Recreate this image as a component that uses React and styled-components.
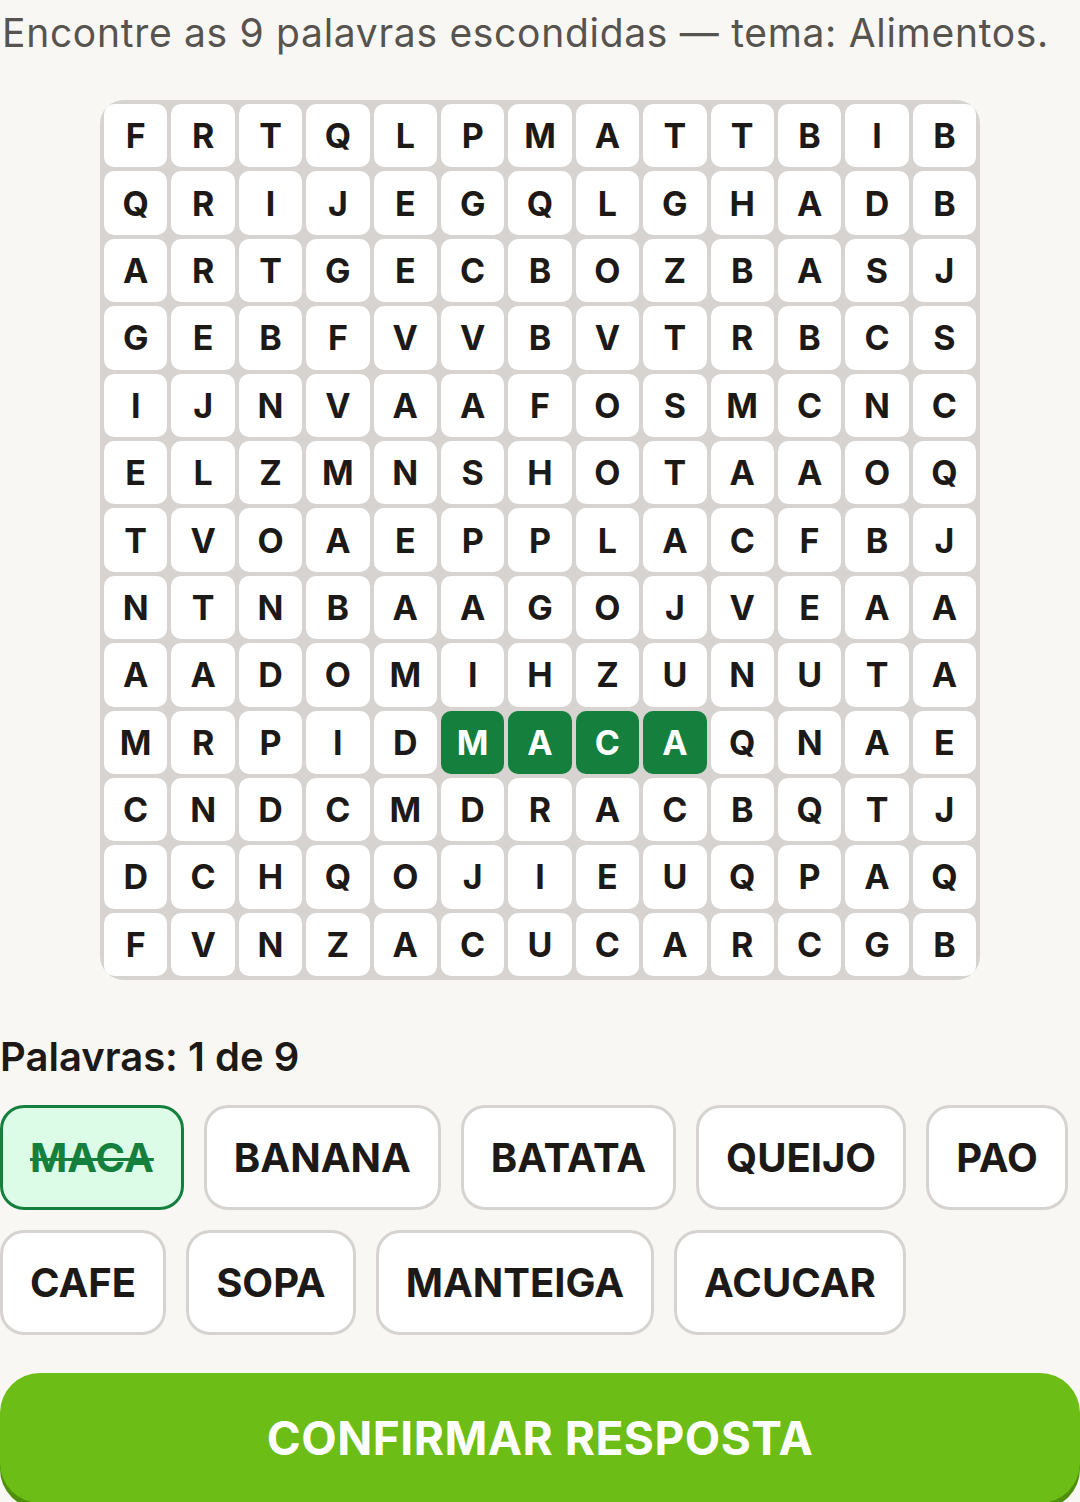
import React from "react";
import styled, { createGlobalStyle } from "styled-components";

const GlobalStyle = createGlobalStyle`
  html, body {
    margin: 0;
    padding: 0;
    background: #f9f7f4;
  }
  body {
    font-family: Inter, "Noto Sans", "Liberation Sans", sans-serif;
    color: #1c1917;
    overflow: hidden;
  }
`;

const ROWS = [
  "FRTQLPMATTBIB",
  "QRIJEGQLGHADB",
  "ARTGECBOZBASJ",
  "GEBFVVBVTRBCS",
  "IJNVAAFOSMCNC",
  "ELZMNSHOTAAOQ",
  "TVOAEPPLACFBJ",
  "NTNBAAGOJVEAA",
  "AADOMIHZUNUTA",
  "MRPIDMACAQNAE",
  "CNDCMDRACBQTJ",
  "DCHQOJIEUQPAQ",
  "FVNZACUCARCGB",
];

// cells of the word already found (row, col)
const found = new Set(["9-5", "9-6", "9-7", "9-8"]);

const WORDS = [
  { text: "MACA", done: true },
  { text: "BANANA" },
  { text: "BATATA" },
  { text: "QUEIJO" },
  { text: "PAO" },
  { text: "CAFE" },
  { text: "SOPA" },
  { text: "MANTEIGA" },
  { text: "ACUCAR" },
];

const Page = styled.div`
  width: 1080px;
  display: flex;
  flex-direction: column;
`;

const Intro = styled.p`
  margin: 0;
  padding-left: 2px;
  font-size: 39px;
  letter-spacing: 0.7px;
  line-height: 65px;
  color: #57534e;
  white-space: nowrap;
`;

const Board = styled.div`
  margin: 35px auto 0;
  width: 880px;
  box-sizing: border-box;
  padding: 4px;
  background: #d6d3d1;
  border-radius: 24px;
  display: grid;
  grid-template-columns: repeat(13, 1fr);
  gap: 4px;
`;

const Cell = styled.div`
  aspect-ratio: 1;
  border-radius: 10px;
  display: flex;
  align-items: center;
  justify-content: center;
  font-size: 34px;
  font-weight: 700;
  background: ${(p) => (p.$hit ? "#15803d" : "#ffffff")};
  color: ${(p) => (p.$hit ? "#ffffff" : "#1c1917")};
`;

const Counter = styled.h2`
  margin: 53px 0 0;
  font-size: 40px;
  line-height: 48px;
  font-weight: 600;
`;

const Chips = styled.div`
  margin-top: 24px;
  display: flex;
  flex-wrap: wrap;
  gap: 20px;
`;

const Chip = styled.div`
  box-sizing: border-box;
  height: 105px;
  padding: 0 27px;
  display: flex;
  align-items: center;
  border-radius: 24px;
  border: 3px solid ${(p) => (p.$done ? "#15803d" : "#d6d3d1")};
  background: ${(p) => (p.$done ? "#dcfce7" : "#ffffff")};
  color: ${(p) => (p.$done ? "#15803d" : "#1c1917")};
  font-size: 40px;
  font-weight: 700;
  text-decoration: ${(p) => (p.$done ? "line-through" : "none")};
  text-decoration-thickness: 3px;
`;

const Confirm = styled.button`
  margin-top: 38px;
  width: 1080px;
  height: 130px;
  padding: 0;
  border: none;
  border-radius: 40px;
  background: #6cbd15;
  box-shadow: 0 6px 0 #4e8f0c;
  color: #ffffff;
  font-family: inherit;
  font-size: 46px;
  font-weight: 700;
  letter-spacing: 0.5px;
  cursor: pointer;
`;

export default function App() {
  return (
    <>
      <GlobalStyle />
      <Page>
        <Intro>Encontre as 9 palavras escondidas — tema: Alimentos.</Intro>
        <Board>
          {ROWS.map((row, r) =>
            row.split("").map((ch, c) => (
              <Cell key={r + "-" + c} $hit={found.has(r + "-" + c)}>
                {ch}
              </Cell>
            ))
          )}
        </Board>
        <Counter>Palavras: 1 de 9</Counter>
        <Chips>
          {WORDS.map((w) => (
            <Chip key={w.text} $done={w.done}>
              {w.text}
            </Chip>
          ))}
        </Chips>
        <Confirm>CONFIRMAR RESPOSTA</Confirm>
      </Page>
    </>
  );
}
